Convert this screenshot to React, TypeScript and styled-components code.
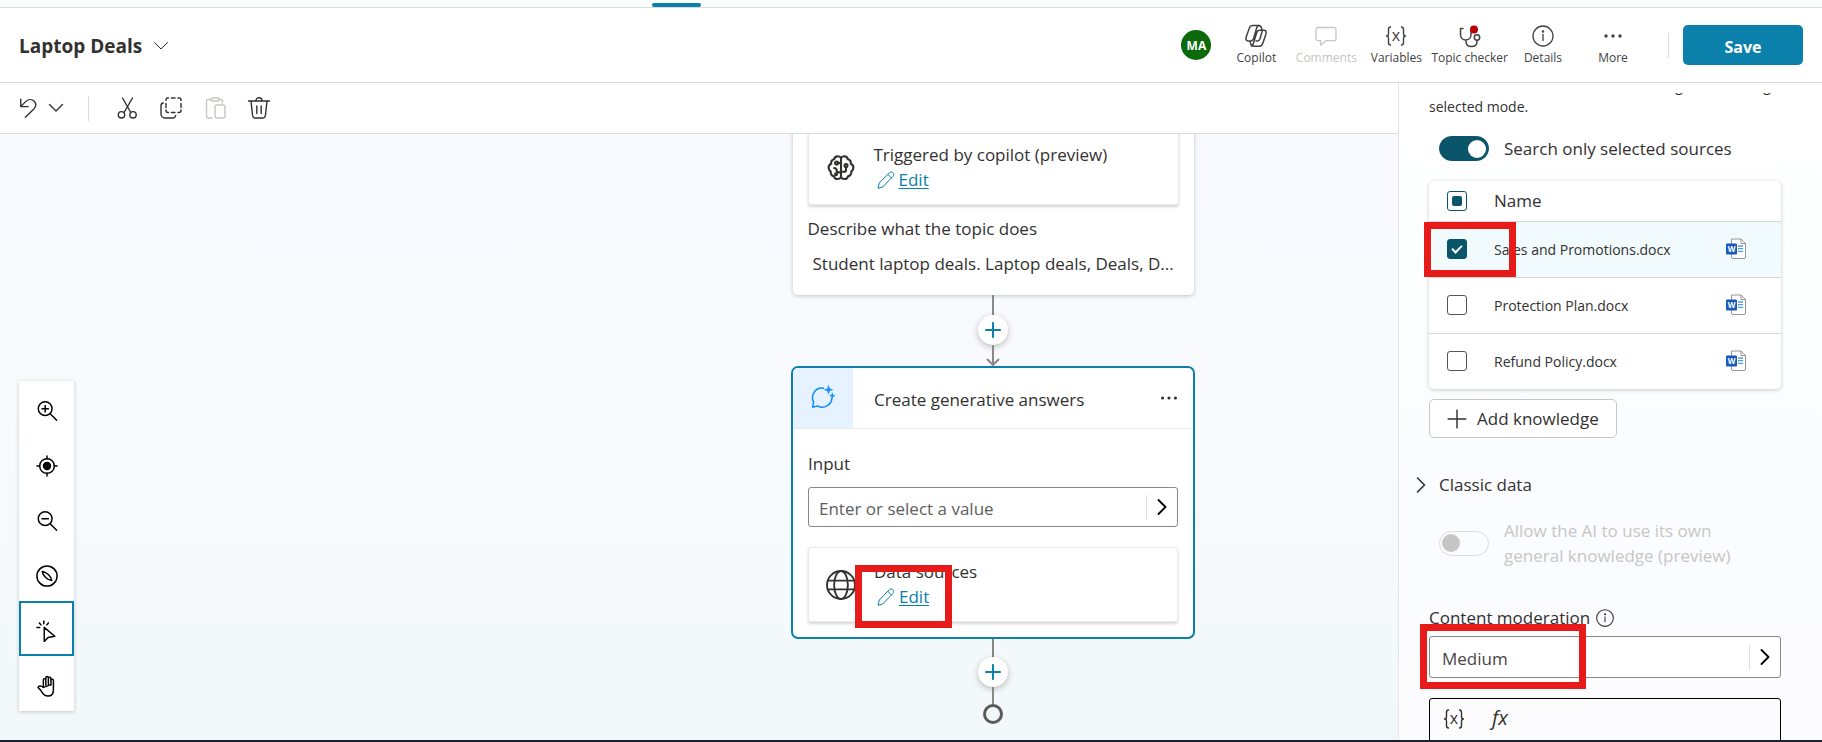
import React from 'react';
import styled, { createGlobalStyle, css } from 'styled-components';

const teal = '#0a80ab';
const deepTeal = '#0b556a';

const GlobalStyle = createGlobalStyle`
  *, *::before, *::after { box-sizing: border-box; }
  body { margin: 0; background: #fff; }
  body, button, input, select, table {
    font-family: "Open Sans", "Noto Sans", sans-serif;
    color: #323130;
  }
  button { background: none; border: 0; padding: 0; cursor: pointer; }
  svg { display: block; flex: none; }
`;

/* ---------- Page frame ---------- */

const Page = styled.div`
  display: flex;
  flex-direction: column;
  height: 100vh;
  overflow: hidden;
  border-bottom: 2px solid #1b2130;
`;

const TabStrip = styled.nav`
  display: flex;
  align-items: flex-end;
  flex: none;
  height: 8px;
  padding-left: 652px;
  border-bottom: 1px solid #dcdcdc;
  background: #fcfefe;
`;

const TabIndicator = styled.span`
  width: 49px;
  height: 4px;
  border-radius: 2px;
  background: ${teal};
`;

const Header = styled.header`
  display: flex;
  align-items: center;
  flex: none;
  height: 75px;
  padding: 0 19px;
  border-bottom: 1px solid #dcdcdc;
`;

const TopicTitle = styled.button`
  display: flex;
  align-items: center;
  gap: 11px;
  margin-right: auto;
  padding-top: 1px;
  font-size: 19px;
  line-height: 24px;
  font-weight: 700;
`;

const Avatar = styled.span`
  display: grid;
  place-items: center;
  width: 30px;
  height: 30px;
  margin-right: 10px;
  border-radius: 50%;
  background: #0b6a0b;
  color: #fff;
  font-size: 12px;
  font-weight: 700;
`;

const Command = styled.button`
  display: flex;
  flex-direction: column;
  align-items: center;
  gap: 2px;
  min-width: 70px;
  font-size: 12px;
  line-height: 16px;
  color: #424242;
  white-space: nowrap;
  &:disabled { color: #c8c6c4; cursor: default; }
`;

const Divider = styled.span<{ $gap: string }>`
  width: 1px;
  height: 25px;
  margin: ${(p) => p.$gap};
  background: #dcdcdc;
`;

const SaveButton = styled.button`
  width: 120px;
  height: 40px;
  padding-top: 3px;
  border-radius: 5px;
  background: ${teal};
  color: #fff;
  font-size: 16px;
  font-weight: 700;
`;

const Workspace = styled.main`
  display: flex;
  flex: 1;
  min-height: 0;
`;

const Editor = styled.section`
  display: flex;
  flex-direction: column;
  flex: 1;
  min-width: 0;
`;

const Toolbar = styled.div`
  display: flex;
  align-items: center;
  flex: none;
  height: 51px;
  padding-left: 18px;
  border-bottom: 1px solid #dcdcdc;
`;

const Tool = styled.button<{ $gap?: number }>`
  margin-right: ${(p) => p.$gap ?? 20}px;
  color: #323130;
  &:disabled { color: #c8c6c4; }
`;

const Canvas = styled.div`
  position: relative;
  flex: 1;
  overflow: hidden;
  background: linear-gradient(180deg, #f9faff 0%, #f8fafe 45%, #f2f8fa 100%);
`;

/* ---------- Canvas palette ---------- */

const Palette = styled.div`
  position: absolute;
  left: 19px;
  bottom: 29px;
  display: flex;
  flex-direction: column;
  background: #fff;
  box-shadow: 0 1px 4px rgba(0, 0, 0, 0.2);
`;

const PaletteButton = styled.button<{ $active?: boolean }>`
  display: grid;
  place-items: center;
  width: 55px;
  height: 55px;
  padding-top: 5px;
  color: #000;
  border: 2px solid ${(p) => (p.$active ? teal : 'transparent')};
`;

/* ---------- Flow ---------- */

const Flow = styled.div`
  position: absolute;
  left: 791px;
  top: -19px;
  display: flex;
  flex-direction: column;
  align-items: center;
  width: 404px;
`;

const Node = styled.article<{ $selected?: boolean }>`
  width: ${(p) => (p.$selected ? 404 : 401)}px;
  background: #fff;
  ${(p) =>
    p.$selected
      ? css`
          border: 2px solid ${teal};
          border-radius: 7px;
        `
      : css`
          border-radius: 5px;
          box-shadow: 0 1px 4px rgba(0, 0, 0, 0.22);
        `}
`;

const NodeBody = styled.div`
  padding: 15px;
`;

const NodeHeader = styled.div`
  display: flex;
  align-items: center;
  height: 61px;
  padding-right: 13px;
  border-bottom: 1px solid #edebe9;
`;

const NodeBadge = styled.span`
  display: grid;
  place-items: center;
  width: 60px;
  height: 60px;
  margin-right: 21px;
  padding-bottom: 3px;
  border-radius: 5px 0 0 0;
  background: #e6f2ff;
`;

const NodeTitle = styled.h2`
  flex: 1;
  margin: 0;
  padding-top: 4px;
  font-size: 17px;
  line-height: 24px;
  font-weight: 500;
`;

const Label = styled.label`
  display: block;
  font-size: 17px;
  line-height: 24px;
  font-weight: 500;
`;

const NodeLabel = styled(Label)<{ $top?: number }>`
  margin: ${(p) => p.$top ?? 8}px 0 11px;
`;

const Described = styled.p`
  margin: 0 0 4px 5px;
  font-size: 17px;
  line-height: 24px;
  white-space: nowrap;
`;

const ActionCard = styled.div`
  position: relative;
  display: flex;
  align-items: center;
  height: 75px;
  padding-left: 17px;
  border: 1px solid #edebe9;
  border-radius: 3px;
  background: #fff;
  box-shadow: 0 2px 3px rgba(0, 0, 0, 0.16);
`;

const ActionText = styled.div`
  margin-left: 18px;
  padding-bottom: 1px;
  font-size: 17px;
  line-height: 25px;
  font-weight: 500;
`;

const EditLink = styled.a`
  display: flex;
  align-items: center;
  gap: 3px;
  padding-left: 2px;
  color: ${teal};
  font-weight: 400;
  text-decoration: none;
  span { text-decoration: underline; text-underline-offset: 2px; }
`;

const Field = styled.div<{ $tall?: boolean }>`
  position: relative;
  display: flex;
  align-items: center;
  height: ${(p) => (p.$tall ? 42 : 40)}px;
  border: 1px solid #8a8886;
  border-radius: 3px;
  background: #fff;
`;

const NodeField = styled(Field)`
  margin-bottom: 20px;
`;

const FieldInput = styled.input`
  flex: 1;
  min-width: 0;
  height: 100%;
  padding: 2px 0 0 10px;
  border: 0;
  background: none;
  font-size: 17px;
  outline: 0;
  &::placeholder { color: #605e5c; opacity: 1; }
`;

const FieldSelect = styled.select`
  flex: 1;
  height: 100%;
  padding: 2px 0 0 12px;
  border: 0;
  background: none;
  appearance: none;
  font-size: 17px;
  color: #484644;
  outline: 0;
`;

const FieldButton = styled.button`
  display: grid;
  place-items: center;
  width: 31px;
  height: 25px;
  border-left: 1px solid #dcdcdc;
  color: #000;
`;

const Line = styled.span<{ $h: number }>`
  width: 2px;
  height: ${(p) => p.$h}px;
  background: #8a8886;
`;

const AddNode = styled.button`
  display: grid;
  place-items: center;
  width: 30px;
  height: 30px;
  border-radius: 50%;
  background: #fff;
  color: ${teal};
  box-shadow: 0 2px 6px rgba(0, 0, 0, 0.25);
`;

const EndPoint = styled.span`
  width: 20px;
  height: 20px;
  border: 3px solid #5c5a58;
  border-radius: 50%;
`;

const Highlight = styled.span<{ $x: number; $y: number; $w: number; $h: number }>`
  position: absolute;
  z-index: 2;
  left: ${(p) => p.$x}px;
  top: ${(p) => p.$y}px;
  width: ${(p) => p.$w}px;
  height: ${(p) => p.$h}px;
  border: 7px solid #e81b1b;
  pointer-events: none;
`;

/* ---------- Properties panel ---------- */

const Panel = styled.aside`
  flex: none;
  display: flex;
  flex-direction: column;
  width: 424px;
  padding-top: 10px;
  border-left: 1px solid #e6e6e6;
  background: linear-gradient(180deg, #ffffff 0%, #fdfefe 30%, #fbfcff 60%, #fcfcff 100%);
`;

const PanelScroll = styled.div`
  flex: 1;
  min-height: 0;
  overflow: hidden;
  padding: 0 41px 0 30px;
`;

const Hint = styled.p`
  margin: -18px 0 19px;
  font-size: 14px;
  line-height: 21px;
`;

const SwitchRow = styled.label<{ $off?: boolean }>`
  display: flex;
  align-items: center;
  gap: 15px;
  padding: 0 ${(p) => (p.$off ? 50 : 0)}px 0 10px;
  font-size: 17px;
  line-height: 25px;
  color: ${(p) => (p.$off ? '#c8c6c4' : '#323130')};
`;

const Switch = styled.input`
  appearance: none;
  flex: none;
  display: flex;
  align-items: center;
  width: 50px;
  height: 25px;
  margin: 0;
  padding: 0 2px;
  border: 1px solid #dcdcdc;
  border-radius: 13px;
  &::before {
    content: '';
    width: 18px;
    height: 18px;
    border-radius: 50%;
    background: #c8c6c4;
  }
  &:checked {
    justify-content: flex-end;
    background: ${deepTeal};
    border-color: ${deepTeal};
  }
  &:checked::before { background: #fff; }
`;

const Sources = styled.div`
  position: relative;
  margin-top: 20px;
`;

const SourceTable = styled.table`
  width: 100%;
  border-collapse: collapse;
  border-radius: 5px;
  background: #fff;
  box-shadow: 0 1px 4px rgba(0, 0, 0, 0.2);
  th, td { padding: 0; text-align: left; vertical-align: middle; }
  th { height: 40px; font-size: 17px; font-weight: 400; }
  td { height: 56px; font-size: 14px; font-weight: 500; }
`;

const SourceRow = styled.tr<{ $selected?: boolean }>`
  border-top: 1px solid #d6d6d6;
  background: ${(p) => (p.$selected ? '#f1fafd' : 'transparent')};
`;

const CheckCell = styled.td`
  width: 65px;
`;

const IconCell = styled.td`
  width: 56px;
`;

const Check = styled.input`
  appearance: none;
  display: grid;
  place-items: center;
  width: 20px;
  height: 20px;
  margin: 0 0 0 18px;
  border: 1px solid #555;
  border-radius: 3px;
  background: #fff;
  &:checked { background: ${deepTeal}; border-color: ${deepTeal}; }
  &:checked::before {
    content: '';
    width: 10px;
    height: 6px;
    margin-top: -3px;
    border: solid #fff;
    border-width: 0 0 2px 2px;
    transform: rotate(-45deg);
  }
  &:indeterminate { background: #fff; border-color: ${deepTeal}; }
  &:indeterminate::before {
    content: '';
    width: 10px;
    height: 10px;
    margin: 0;
    border: 0;
    border-radius: 2px;
    background: ${deepTeal};
    transform: none;
  }
`;

const AddKnowledge = styled.button`
  display: flex;
  align-items: center;
  gap: 10px;
  height: 39px;
  margin-top: 10px;
  padding: 0 17px;
  border: 1px solid #c8c6c4;
  border-radius: 5px;
  background: #fff;
  font-size: 17px;
  font-weight: 500;
`;

const Disclosure = styled.button`
  display: flex;
  align-items: center;
  gap: 10px;
  margin: 34px 0 20px -16px;
  font-size: 17px;
  line-height: 26px;
  font-weight: 500;
`;

const FieldHead = styled.div`
  display: flex;
  align-items: center;
  gap: 5px;
  margin-top: 38px;
  margin-bottom: 6px;
  color: #323130;
`;

const FormulaBar = styled.div`
  display: flex;
  align-items: flex-start;
  gap: 26px;
  height: 90px;
  margin-top: 20px;
  padding: 8px 12px;
  border: 1px solid #000;
  border-radius: 3px;
`;

const FxGlyph = styled.span`
  font-family: "Open Sans", sans-serif;
  font-style: italic;
  font-size: 20px;
  line-height: 22px;
`;

/* ---------- Icons ---------- */

type IconProps = { size?: number; w?: number; children: React.ReactNode; box?: string };

const Icon = ({ size = 24, w = 1.3, box = '0 0 24 24', children }: IconProps) => (
  <svg
    width={size}
    height={size}
    viewBox={box}
    fill="none"
    stroke="currentColor"
    strokeWidth={w}
    strokeLinecap="round"
    strokeLinejoin="round"
    aria-hidden="true"
  >
    {children}
  </svg>
);

const Chevron = ({ down, w = 1.4 }: { down?: boolean; w?: number }) => (
  <Icon size={16} box="0 0 16 16" w={w}>
    <path d={down ? 'M1.5 4.5 8 11l6.5-6.5' : 'M4.5 1 11.5 8l-7 7'} />
  </Icon>
);

const PlusIcon = ({ size, w }: { size: number; w: number }) => (
  <Icon size={size} box="0 0 18 18" w={w}>
    <path d="M9 1v16M1 9h16" />
  </Icon>
);

const VariableIcon = () => (
  <Icon box="-1 -1 24 24" w={1.4}>
    <path d="M5.500 2C3.500 2 3.500 3 3.500 4.500v4C3.500 10 3 11 1.500 11c1.500 0 2 1 2 2.500v4c0 1.500 0 2.500 2 2.500M16.500 2c2 0 2 1 2 2.500v4c0 1.500.5 2.500 2 2.500-1.500 0-2 1-2 2.500v4c0 1.500 0 2.500-2 2.500" />
    <text x="11" y="15.500" textAnchor="middle" fontSize="16" fill="currentColor" stroke="none">x</text>
  </Icon>
);

const CopilotIcon = () => (
  <Icon w={1.5}>
    <path d="M8.500 1.500h6.300c1.500 0 2.200.8 2.600 2.300l.7 2.200M8.500 1.500C6.500 1.500 5.700 2.700 5.200 4.500L2.200 13c-.8 2.500 0 4 2 4h2.600c1.700 0 2.300-1 2.800-2.600L12.500 4.500c.5-1.700.9-3 2.500-3M15.500 6.200h4.300c2 0 2.900 1.400 2.100 4l-2.800 8.300c-.6 2-1.500 3.700-3.700 3.700H9.200c-1.400 0-2.100-.8-2.500-2.200L6 17.200M15.500 6.200c-1.600 0-2.300 1-2.800 2.600l-3 9.500c-.5 1.900-.9 3.700-2.400 3.700M12 17h1.500c1.300 0 2-.8 2.500-2.300l2.400-8.300" />
  </Icon>
);

const CommentIcon = () => (
  <Icon>
    <path d="M4 3.500h16a2 2 0 0 1 2 2v9.200a2 2 0 0 1-2 2h-8l-5.500 4.500v-4.500H4a2 2 0 0 1-2-2V5.500a2 2 0 0 1 2-2z" />
  </Icon>
);

const CheckerIcon = () => (
  <Icon w={1.5}>
    <path d="M5 4.500H2.500v6.300c0 3 2.200 5.200 5.200 5.200s5.300-2.200 5.300-5.200V7M8 16v1.500c0 3 2.200 5 5.500 5s5.500-2 5.500-5V16.500" />
    <circle cx="19" cy="13.500" r="2.700" />
    <circle cx="16" cy="5.500" r="4" fill="#b80000" stroke="none" />
  </Icon>
);

const InfoIcon = ({ size = 24, w = 1.3 }: { size?: number; w?: number }) => (
  <Icon size={size} w={w}>
    <circle cx="12" cy="12" r="10" />
    <path d="M12 10.500v6" />
    <circle cx="12" cy="7.500" r=".6" fill="currentColor" />
  </Icon>
);

const DotsIcon = ({ size = 24 }: { size?: number }) => (
  <Icon size={size} w={0}>
    <g fill="currentColor">
      <circle cx="5" cy="12" r="1.700" />
      <circle cx="12" cy="12" r="1.700" />
      <circle cx="19" cy="12" r="1.700" />
    </g>
  </Icon>
);

const UndoIcon = () => (
  <Icon size={22} w={1.5}>
    <path d="M3 2.500v8h8M3 10.500 8 5.300c3-3 7-3.300 9.500-.9 2.700 2.600 2.400 6.200-.2 8.800L8 22" />
  </Icon>
);

const CutIcon = () => (
  <Icon w={1.4}>
    <path d="m7.500 2 8.300 14.500M17.500 2 9 16.500" />
    <circle cx="6.500" cy="18.800" r="3.200" />
    <circle cx="18" cy="18.800" r="3.200" />
  </Icon>
);

const CopyIcon = () => (
  <Icon w={1.4}>
    <path d="M9.500 2H9a2 2 0 0 0-2 2v.5M7 7.500v4M7 14v.5a2 2 0 0 0 2 2h.5M12.500 2h3.500M19 2h1a2 2 0 0 1 2 2v.5M22 7.500v4M22 14v.5a2 2 0 0 1-2 2h-1M12.500 16.500h3.500M4.300 7C2.800 7.200 2 8.200 2 9.800v8.200a4 4 0 0 0 4 4h7.500c2 0 3-.8 3.200-2.500" />
  </Icon>
);

const PasteIcon = () => (
  <Icon w={1.4}>
    <path d="M8 3.500H5.500a2 2 0 0 0-2 2V20a2 2 0 0 0 2 2H9M16 3.500h1.500a2 2 0 0 1 2 2V7" />
    <rect x="8" y="2" width="8" height="3" rx="1.500" />
    <rect x="12" y="9" width="10" height="13" rx="1.800" />
  </Icon>
);

const TrashIcon = () => (
  <Icon w={1.4}>
    <path d="M1.500 5h21M9 4.800C9 3 10 1.800 12 1.800s3 1.200 3 3M4 5l1.600 14.500c.2 1.700 1 2.500 2.600 2.500h7.600c1.600 0 2.400-.8 2.600-2.500L20 5M9.800 10v7.500M14.200 10v7.500" />
  </Icon>
);

const PencilIcon = () => (
  <Icon size={20} w={1.2}>
    <path d="M2.500 21.500 4 15.500 16 3.300c1.300-1.300 3-1.300 4.300 0s1.300 3 0 4.300L8.500 20zM14.200 5.200l4.400 4.400" />
  </Icon>
);

const BrainIcon = () => (
  <Icon size={30} w={1.7}>
    <path d="M12 4.300C11.500 3 10 2.500 8.800 2.700 7.500 2.900 6.700 3.900 6.500 5 4.600 5.300 3.800 7 4.200 8.600 2.600 9.300 1.800 11 2.300 12.800c.2 1 .8 1.600 1.500 2-.4 1.900.8 3.600 2.600 3.900.4 1.400 1.600 2.200 2.900 2.100 1.300 0 2.300-.7 2.700-1.800V4.300c.5-1.300 2-1.800 3.200-1.600 1.300.2 2.100 1.200 2.300 2.300 1.900.3 2.700 2 2.300 3.600 1.600.7 2.400 2.400 1.900 4.200-.2 1-.8 1.600-1.500 2 .4 1.900-.8 3.600-2.600 3.900-.4 1.400-1.600 2.200-2.900 2.100-1.300 0-2.300-.7-2.700-1.800M12 8H9.500M12 15.500H10c-1 0-1.500-.5-1.500-1.500 0-1.200-.6-2-2-2M12 15h2.500c1 0 1.500-.5 1.500-1.500V11.500" />
    <circle cx="8.500" cy="8" r="1.200" />
    <circle cx="16" cy="10" r="1.200" />
    <circle cx="8" cy="17" r=".8" />
  </Icon>
);

const GlobeIcon = () => (
  <Icon size={30} w={1.5}>
    <circle cx="12" cy="12" r="11.200" />
    <ellipse cx="12" cy="12" rx="5.500" ry="11.200" />
    <path d="M1.500 8.500h21M1.500 15.500h21" />
  </Icon>
);

const AnswersIcon = () => (
  <svg width="24" height="24" viewBox="0 0 24 24" fill="none" stroke="#118dff" strokeWidth="1.500" strokeLinecap="round" aria-hidden="true">
    <path d="M12.500 3.200A9.400 9.400 0 0 0 2.600 16.800L1.700 22l5.200-.9a9.600 9.600 0 0 0 14-8" />
    <path d="M17.500.5l1.100 3.200 3.200 1.100-3.200 1.100-1.100 3.200-1.100-3.200-3.200-1.100 3.200-1.100zM21.300 8l.8 2 2 .8-2 .8-.8 2-.8-2-2-.8 2-.8z" fill="#118dff" strokeWidth=".4" />
  </svg>
);

const WordIcon = () => (
  <svg width="22" height="22" viewBox="0 0 22 22" aria-hidden="true">
    <path d="M6.500 1h9.500L20.500 5.500V19a1.500 1.500 0 0 1-1.500 1.500H8A1.500 1.500 0 0 1 6.500 19z" fill="#fff" stroke="#979593" />
    <path d="M16 1v4.500h4.500" fill="none" stroke="#979593" />
    <path d="M13 8h5M13 10.700h5M13 13.400h5" stroke="#4aa0ea" strokeWidth="1.300" />
    <rect x="1" y="5.500" width="11" height="11" rx="1" fill="#185abd" />
    <text x="6.500" y="14" textAnchor="middle" fontSize="8" fontWeight="700" fill="#fff">W</text>
  </svg>
);

const paletteItems = [
  {
    name: 'Zoom in',
    icon: <><circle cx="10" cy="9.500" r="7.500" /><path d="m15.500 15 7 7M10 6v7M6.500 9.500h7" /></>,
  },
  {
    name: 'Fit to view',
    icon: <><circle cx="12" cy="12" r="8" /><circle cx="12" cy="12" r="3.800" fill="currentColor" /><path d="M12 1v3M12 20v3M1 12h3M20 12h3" /></>,
  },
  {
    name: 'Zoom out',
    icon: <><circle cx="10" cy="9.500" r="7.500" /><path d="m15.500 15 7 7M6.500 9.500h7" /></>,
  },
  {
    name: 'Map',
    icon: <><circle cx="12" cy="12" r="11" /><path d="M6.800 7c4 .4 9.500 4.500 10.400 10C12.800 16.500 7.300 12 6.800 7z" /></>,
  },
  {
    name: 'Select',
    icon: <path d="M9 8v15.500l4.200-4.500 7.300-1.200zM8.500 1v3M13.500 3.200l-1.700 2.100M3.700 3.200l1.700 2.100M1 8.200h3" />,
  },
  {
    name: 'Pan',
    icon: <path d="M8 13.500V5.300c0-1.800 2.700-1.800 2.700 0V11M10.700 10V3c0-1.900 2.800-1.900 2.800 0v7.500M13.500 10V3.800c0-1.800 2.800-1.800 2.800 0V11M16.300 10.500V6c0-1.800 2.700-1.800 2.700 0v10c0 4.500-2.200 7-6 7-3.500 0-4.800-1.500-6.500-4.300-1.300-2.200-2.500-3.700-4.300-5 .8-2.200 3.200-2.300 5.800-.2z" />,
  },
];

const documents = [
  { name: 'Sales and Promotions.docx', selected: true },
  { name: 'Protection Plan.docx', selected: false },
  { name: 'Refund Policy.docx', selected: false },
];

const EditAction = () => (
  <EditLink href="#edit">
    <PencilIcon />
    <span>Edit</span>
  </EditLink>
);

export default function App() {
  return (
    <Page>
      <GlobalStyle />
      <TabStrip aria-label="Sections"><TabIndicator /></TabStrip>
      <Header>
        <TopicTitle>
          Laptop Deals
          <Chevron down w={1} />
        </TopicTitle>
        <Avatar>MA</Avatar>
        <Command><CopilotIcon />Copilot</Command>
        <Command disabled><CommentIcon />Comments</Command>
        <Command><VariableIcon />Variables</Command>
        <Command><CheckerIcon />Topic checker</Command>
        <Command><InfoIcon />Details</Command>
        <Command><DotsIcon />More</Command>
        <Divider $gap="0 14px 0 20px" />
        <SaveButton>Save</SaveButton>
      </Header>
      <Workspace>
        <Editor>
          <Toolbar>
            <Tool $gap={8} aria-label="Undo"><UndoIcon /></Tool>
            <Tool $gap={24} aria-label="Undo history"><Chevron down /></Tool>
            <Divider $gap="0 26px 0 0" />
            <Tool aria-label="Cut"><CutIcon /></Tool>
            <Tool aria-label="Copy"><CopyIcon /></Tool>
            <Tool disabled aria-label="Paste"><PasteIcon /></Tool>
            <Tool aria-label="Delete"><TrashIcon /></Tool>
          </Toolbar>
          <Canvas>
            <Flow>
              <Node>
                <NodeBody>
                  <ActionCard>
                    <BrainIcon />
                    <ActionText>
                      Triggered by copilot (preview)
                      <EditAction />
                    </ActionText>
                  </ActionCard>
                  <NodeLabel as="h3" $top={12}>Describe what the topic does</NodeLabel>
                  <Described>Student laptop deals. Laptop deals, Deals, D...</Described>
                </NodeBody>
              </Node>
              <Line $h={20} />
              <AddNode aria-label="Add node"><PlusIcon size={16} w={2.2} /></AddNode>
              <svg width="14" height="21" viewBox="0 0 14 21" fill="none" stroke="#8a8886" strokeWidth="2" aria-hidden="true">
                <path d="M7 0v20M1 14l6 6 6-6" />
              </svg>
              <Node $selected>
                <NodeHeader>
                  <NodeBadge><AnswersIcon /></NodeBadge>
                  <NodeTitle>Create generative answers</NodeTitle>
                  <button aria-label="More actions"><DotsIcon size={22} /></button>
                </NodeHeader>
                <NodeBody>
                  <NodeLabel htmlFor="node-input">Input</NodeLabel>
                  <NodeField>
                    <FieldInput id="node-input" placeholder="Enter or select a value" />
                    <FieldButton aria-label="Select a value"><Chevron w={1.8} /></FieldButton>
                  </NodeField>
                  <ActionCard>
                    <GlobeIcon />
                    <ActionText>
                      Data sources
                      <EditAction />
                    </ActionText>
                    <Highlight $x={46} $y={17} $w={97} $h={63} />
                  </ActionCard>
                </NodeBody>
              </Node>
              <Line $h={18} />
              <AddNode aria-label="Add node"><PlusIcon size={16} w={2.2} /></AddNode>
              <Line $h={17} />
              <EndPoint />
            </Flow>
            <Palette>
              {paletteItems.map((item) => (
                <PaletteButton key={item.name} aria-label={item.name} $active={item.name === 'Select'}>
                  <Icon size={22} w={1.6}>{item.icon}</Icon>
                </PaletteButton>
              ))}
            </Palette>
          </Canvas>
        </Editor>
        <Panel>
          <PanelScroll>
            <Hint>The data sources are used in searching the following selected mode.</Hint>
            <SwitchRow>
              <Switch type="checkbox" role="switch" defaultChecked />
              Search only selected sources
            </SwitchRow>
            <Sources>
              <SourceTable>
                <thead>
                  <tr>
                    <CheckCell as="th">
                      <Check
                        type="checkbox"
                        aria-label="Select all sources"
                        ref={(el: HTMLInputElement | null) => {
                          if (el) el.indeterminate = true;
                        }}
                      />
                    </CheckCell>
                    <th>Name</th>
                    <IconCell as="th" />
                  </tr>
                </thead>
                <tbody>
                  {documents.map((doc, i) => (
                    <SourceRow key={doc.name} $selected={doc.selected}>
                      <CheckCell>
                        <Check type="checkbox" id={`doc-${i}`} defaultChecked={doc.selected} />
                      </CheckCell>
                      <td><label htmlFor={`doc-${i}`}>{doc.name}</label></td>
                      <IconCell><WordIcon /></IconCell>
                    </SourceRow>
                  ))}
                </tbody>
              </SourceTable>
              <Highlight $x={-5} $y={41} $w={92} $h={55} />
            </Sources>
            <AddKnowledge><PlusIcon size={20} w={1.3} />Add knowledge</AddKnowledge>
            <Disclosure><Chevron w={1.6} />Classic data</Disclosure>
            <SwitchRow $off>
              <Switch type="checkbox" role="switch" disabled />
              Allow the AI to use its own general knowledge (preview)
            </SwitchRow>
            <FieldHead>
              <Label htmlFor="moderation">Content moderation</Label>
              <InfoIcon size={20} />
            </FieldHead>
            <Field $tall>
              <FieldSelect id="moderation"><option>Medium</option></FieldSelect>
              <FieldButton aria-label="Choose level"><Chevron w={1.8} /></FieldButton>
              <Highlight $x={-10} $y={-13} $w={166} $h={65} />
            </Field>
            <FormulaBar>
              <button aria-label="Insert variable"><VariableIcon /></button>
              <button aria-label="Insert formula"><FxGlyph>fx</FxGlyph></button>
            </FormulaBar>
          </PanelScroll>
        </Panel>
      </Workspace>
    </Page>
  );
}
